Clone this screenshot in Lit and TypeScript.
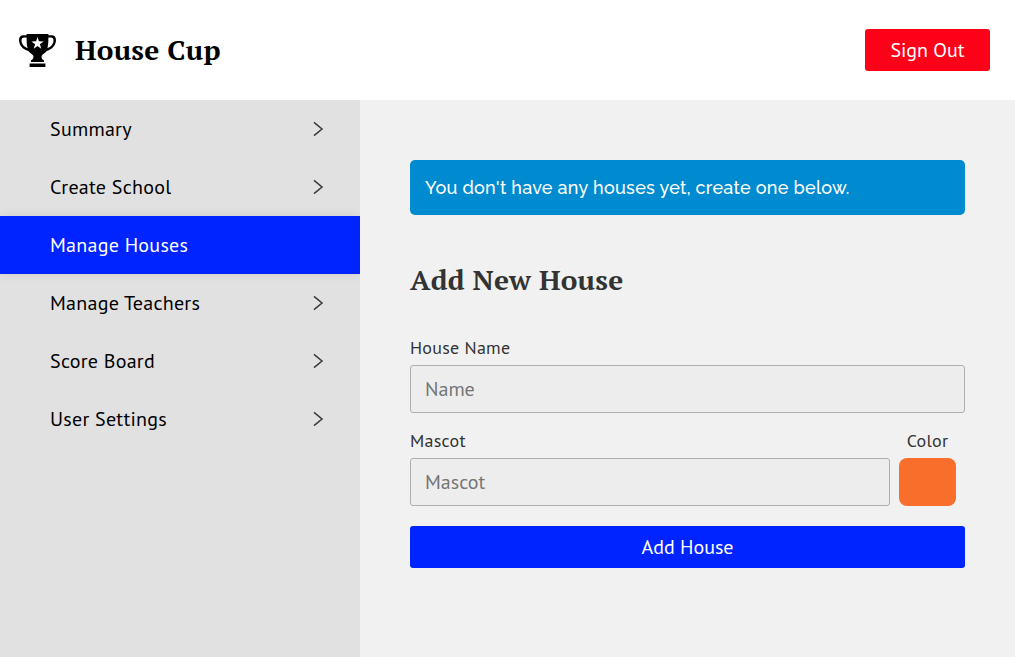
import { LitElement, html, css, svg } from "lit";
import { customElement, property, state } from "lit/decorators.js";
import { classMap } from "lit/directives/class-map.js";

@customElement("trophy-icon")
class TrophyIcon extends LitElement {
  static styles = css`
    :host { display: block; width: 37px; height: 33px; }
    svg { display: block; }
  `;
  render() {
    return svg`<svg width="37" height="33" viewBox="0 0 37 33">
      <path d="M7.600 0h21.800v1.300h3.300c2.700 0 4.300 1.900 4.300 4.800 0 5-3.600 9.500-9.200 11-1.500 1.800-3.500 3-5 4.300-.8 2.200.2 3.800 2.200 5.200v1.400H12v-1.400c2-1.400 3-3 2.200-5.200-1.500-1.300-3.500-2.500-5-4.300C3.600 15.600 0 11.100 0 6.100c0-2.900 1.600-4.800 4.300-4.800h3.300zM7.600 3.400H5.400C3.400 3.400 2.500 4.600 2.500 6.300c0 3.300 2.200 6.500 6.100 8C7.800 11.400 7.600 7.500 7.600 3.400zM29.400 3.400c0 4.100-.2 8-1 10.900 3.900-1.500 6.100-4.700 6.100-8 0-1.700-.9-2.900-2.900-2.900zM18.500 2.900l-1.450 4.400-4.650.1 3.700 2.850-1.350 4.450 3.750-2.600 3.750 2.600-1.350-4.450 3.700-2.850-4.650-.1z" fill-rule="evenodd"/>
      <path d="M10.600 29.500h15.800V33H10.600z"/>
    </svg>`;
  }
}

@customElement("side-item")
class SideItem extends LitElement {
  @property() label = "";
  @property({ type: Boolean }) active = false;
  static styles = css`
    :host { display: block; }
    .item {
      display: flex; align-items: center; justify-content: space-between;
      height: 58px; box-sizing: border-box; padding: 0 36px 0 50px;
      color: #000; font-size: 20px; line-height: 30px; cursor: pointer;
    }
    .active {
      background: #0024ff; color: #fff;
      box-shadow: 0 0 10px rgba(0, 0, 0, 0.1);
    }
    svg { display: block; }
  `;
  render() {
    return html`<div class=${classMap({ item: true, active: this.active })}>
      <span>${this.label}</span>
      ${this.active ? null : html`<svg width="11" height="16" viewBox="0 0 11 16" fill="none" stroke="#3a3a3a" stroke-width="1.5">
        <path d="M1 1.400 9 8 1 14.600"/>
      </svg>`}
    </div>`;
  }
}

@customElement("app-root")
class AppRoot extends LitElement {
  @state() private current = "Manage Houses";
  private items = ["Summary", "Create School", "Manage Houses", "Manage Teachers", "Score Board", "User Settings"];

  static styles = css`
    :host {
      display: flex; flex-direction: column; height: 100vh; overflow: hidden;
      font-family: "PT Sans", "Lato", sans-serif; letter-spacing: 0.26px;
      background: #f1f1f1; color: #333;
    }
    header {
      display: flex; align-items: center; flex: none; height: 100px;
      box-sizing: border-box; padding: 0 25px 0 19px; background: #fff;
    }
    h1, h2 { margin: 0; font-family: "PT Serif", "Liberation Serif", serif; font-size: 28px; font-weight: 700; line-height: 40px; letter-spacing: 0.25px; }
    h1 { flex: 1; margin-left: 19px; color: #000; }
    button {
      border: 0; border-radius: 3px; height: 42px; padding: 0; color: #fff;
      font: 20px "PT Sans", "Lato", sans-serif; cursor: pointer;
    }
    .sign-out { width: 125px; background: #ff0019; }
    .body { display: flex; flex: 1; min-height: 0; }
    nav { width: 360px; flex: none; background: #e1e1e1; overflow: hidden; }
    main { flex: 1; min-width: 0; padding: 60px 50px 0; }
    .notice {
      height: 55px; box-sizing: border-box; padding: 0 15px; border-radius: 5px;
      background: #008acf; color: #fff; font: 500 18px/55px "Raleway", "Lato", sans-serif;
      letter-spacing: 0.28px;
    }
    h2 { margin: 45px 0 35px; }
    form { display: block; }
    label { display: block; font-size: 18px; line-height: 25px; padding-bottom: 5px; }
    input {
      display: block; width: 100%; height: 48px; box-sizing: border-box; padding: 0 14px;
      border: 1px solid #afafaf; border-radius: 3px; background: #ededed;
      font: 20px "PT Sans", "Lato", sans-serif; color: #333;
    }
    input::placeholder { color: #757575; }
    .row { display: flex; margin: 15px 0 20px; }
    .mascot { width: 480px; }
    .color { width: 57px; margin-left: 9px; text-align: center; }
    .swatch { height: 48px; border-radius: 8px; background: #fa6e2b; }
    .add { display: block; width: 100%; background: #0024ff; }
  `;

  render() {
    return html`
      <header>
        <trophy-icon></trophy-icon>
        <h1>House Cup</h1>
        <button class="sign-out">Sign Out</button>
      </header>
      <div class="body">
        <nav>
          ${this.items.map((i) => html`<side-item .label=${i} .active=${i === this.current} @click=${() => (this.current = i)}></side-item>`)}
        </nav>
        <main>
          <div class="notice">You don't have any houses yet, create one below.</div>
          <h2>Add New House</h2>
          <form @submit=${(e: Event) => e.preventDefault()}>
            <label for="name">House Name</label>
            <input id="name" placeholder="Name">
            <div class="row">
              <div class="mascot">
                <label for="mascot">Mascot</label>
                <input id="mascot" placeholder="Mascot">
              </div>
              <div class="color">
                <label>Color</label>
                <div class="swatch"></div>
              </div>
            </div>
            <button class="add">Add House</button>
          </form>
        </main>
      </div>`;
  }
}
